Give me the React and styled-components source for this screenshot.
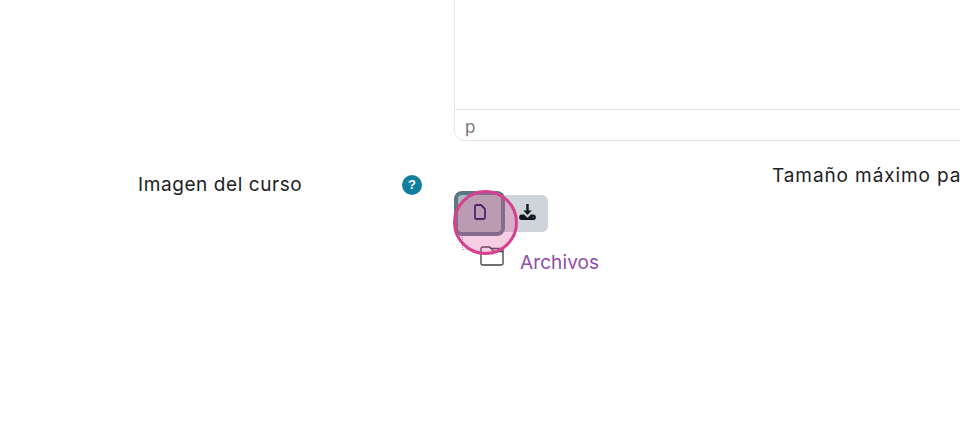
import React from "react";
import styled, { createGlobalStyle } from "styled-components";

const Global = createGlobalStyle`
  html, body { margin: 0; padding: 0; background: #fff; }
  body { font-family: "Inter", "Noto Sans", "Liberation Sans", sans-serif; color: #1d2125; overflow: hidden; }
`;

const Page = styled.div`
  width: 960px;
  height: 434px;
  overflow: hidden;
`;

const EditorRow = styled.div`
  padding-left: 454px;
  margin-top: -10px;
  width: 600px;
`;

const Editor = styled.div`
  border: 1px solid #e3e5e8;
  border-radius: 0 0 10px 10px;
  box-sizing: border-box;
  height: 151px;
  display: flex;
  flex-direction: column;
`;

const EditorBody = styled.div`
  flex: 1;
`;

const StatusBar = styled.div`
  height: 30px;
  flex: none;
  border-top: 1px solid #e3e5e8;
  padding-left: 10px;
  font-size: 17px;
  line-height: 34px;
  color: #73777c;
`;

const FormRow = styled.div`
  display: grid;
  grid-template-columns: 453px 1fr;
  margin-top: 23px;
`;

const LabelCell = styled.div`
  display: flex;
  align-items: flex-start;
  justify-content: space-between;
  padding: 9px 31px 0 138px;
`;

const Label = styled.span`
  font-size: 19px;
  line-height: 24px;
  letter-spacing: 0.58px;
  color: #1d2125;
`;

const Help = styled.span`
  width: 20px;
  height: 20px;
  margin-top: 2px;
  border-radius: 50%;
  background: #0f7f9d;
  color: #fff;
  font: 700 13px/20px "Liberation Sans", sans-serif;
  text-align: center;
`;

const Field = styled.div`
  position: relative;
`;

const SizeNote = styled.div`
  margin-left: 319px;
  font-size: 19px;
  line-height: 24px;
  letter-spacing: 0.9px;
  white-space: nowrap;
`;

const Toolbar = styled.div`
  display: flex;
  margin: 7px 0 0 5px;
`;

const ToolButton = styled.button`
  width: ${(p) => p.$w}px;
  height: 37px;
  padding: 0 0 3px ${(p) => p.$shift}px;
  margin: 0;
  border: none;
  background: ${(p) => p.$bg};
  border-radius: ${(p) => p.$radius};
  display: flex;
  align-items: center;
  justify-content: center;
  box-shadow: ${(p) => p.$ring};
  position: relative;
  z-index: ${(p) => p.$z};
`;

const FileRow = styled.div`
  display: flex;
  align-items: flex-start;
  margin-top: 14px;
  padding-left: 27px;
  gap: 16px;
`;

const FilesLink = styled.a`
  margin-top: 5px;
  font-size: 19px;
  line-height: 24px;
  letter-spacing: 0.1px;
  color: #8f4da8;
  text-decoration: none;
`;

const TreeLine = styled.div`
  position: absolute;
  left: 9px;
  top: 73px;
  width: 11px;
  height: 12px;
  border-left: 1px dotted #9a8f96;
  border-bottom: 1px dotted #b5aab0;
`;

const Spot = styled.div`
  position: absolute;
  left: 0;
  top: 26px;
  width: 65px;
  height: 65px;
  box-sizing: border-box;
  border-radius: 50%;
  border: 3px solid #d6418f;
  background: rgba(226, 88, 160, 0.3);
  pointer-events: none;
  z-index: 2;
`;

const FileIcon = () => (
  <svg width="12" height="16" viewBox="0 0 12 16" fill="none" stroke="#140c50" strokeWidth="1.8">
    <path d="M1 2.200a1.200 1.200 0 0 1 1.200-1.200H7l4 4v8.800a1.200 1.200 0 0 1-1.200 1.200H2.200A1.200 1.200 0 0 1 1 13.800z" strokeLinejoin="round" />
  </svg>
);

const DownloadIcon = () => (
  <svg width="17" height="18" viewBox="0 0 17 18">
    <path d="M7.300 1h2.400v6.500h3L8.500 12 4.300 7.500h3z" fill="#12161c" />
    <path d="M2.500 11.500h2.600l3.400 3.200 3.400-3.200h2.600c1.300 0 2.300 1 2.300 2.300v.9c0 1.300-1 2.300-2.300 2.300H2.500c-1.300 0-2.300-1-2.300-2.300v-.9c0-1.300 1-2.300 2.300-2.300z" fill="#12161c" />
    <circle cx="14" cy="14.300" r="0.800" fill="#2f78c4" />
  </svg>
);

const FolderIcon = () => (
  <svg width="24" height="20" viewBox="0 0 24 20" fill="none" stroke="#3c4046" strokeWidth="1.3" strokeLinejoin="round">
    <path d="M1 3a2 2 0 0 1 2-2h6.500l4.500 4.500h9v12a1.500 1.500 0 0 1-1.500 1.500H2.500A1.500 1.500 0 0 1 1 17.500z" />
    <path d="M9.500 1l1.500 1.500H21a2 2 0 0 1 2 2v1" />
  </svg>
);

export default function App() {
  return (
    <Page>
      <Global />
      <EditorRow>
        <Editor>
          <EditorBody />
          <StatusBar>p</StatusBar>
        </Editor>
      </EditorRow>
      <FormRow>
        <LabelCell>
          <Label>Imagen del curso</Label>
          <Help>?</Help>
        </LabelCell>
        <Field>
          <SizeNote>Tamaño máximo pa</SizeNote>
          <Toolbar>
            <ToolButton $w={43} $z={1} $shift={0} $bg="#aab8bb" $radius="4px" $ring="0 0 0 4px #5c7585">
              <FileIcon />
            </ToolButton>
            <ToolButton $w={47} $z={0} $shift={5} $bg="#ced4da" $radius="0 6px 6px 0" $ring="none">
              <DownloadIcon />
            </ToolButton>
          </Toolbar>
          <FileRow>
            <FolderIcon />
            <FilesLink href="#">Archivos</FilesLink>
          </FileRow>
          <TreeLine />
          <Spot />
        </Field>
      </FormRow>
    </Page>
  );
}
